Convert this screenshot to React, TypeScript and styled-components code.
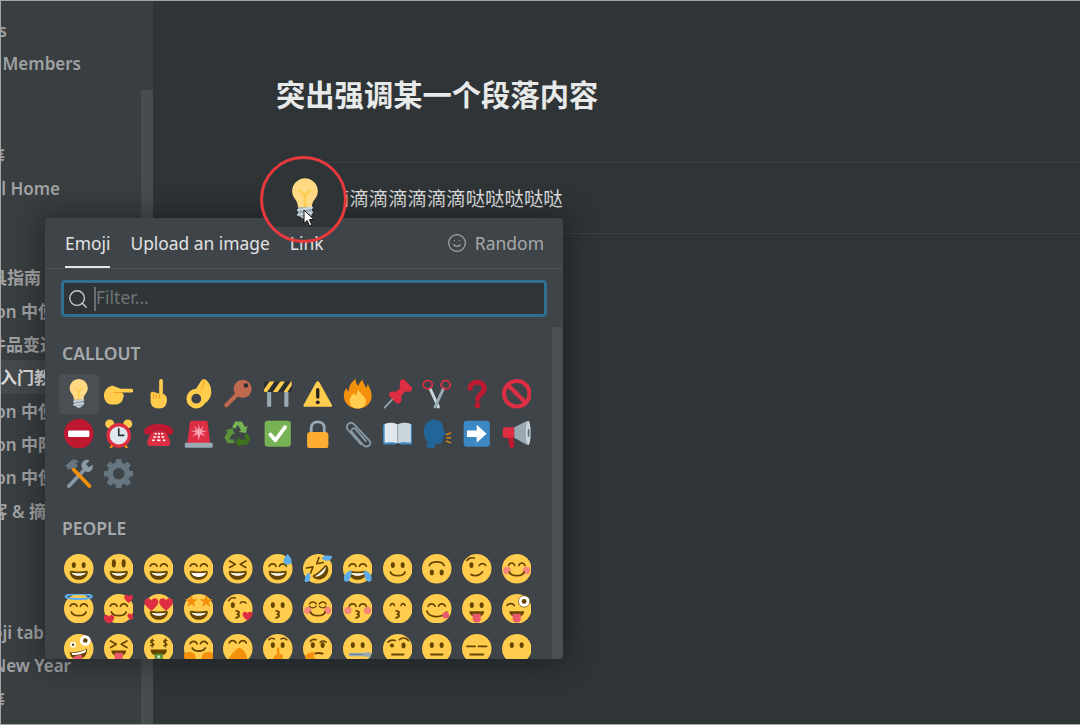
import type { ReactNode } from "react";
import { Search, Smile } from "lucide-react";
import styled, { createGlobalStyle } from "styled-components";

const Y = "#FFCC4D";
const D = "#664500";
const BLUE = "#5DADEC";
const TONGUE = "#E8596E";
const PINK = "#F4708A";
const RED = "#DD2E44";
const HAND = "#F4900C";

const Line = ({ d, w = 2, c = D }: { d: string; w?: number; c?: string }) => (
	<path d={d} fill="none" stroke={c} strokeWidth={w} strokeLinecap="round" strokeLinejoin="round" />
);
const Face = ({ children }: { children?: ReactNode }) => (
	<>
		<circle cx="18" cy="18" r="18" fill={Y} />
		{children}
	</>
);
const Eyes = () => (
	<g fill={D}>
		<ellipse cx="12" cy="13.5" rx="2.5" ry="3.5" />
		<ellipse cx="24" cy="13.5" rx="2.5" ry="3.5" />
	</g>
);
const TallEyes = () => (
	<g fill={D}>
		<ellipse cx="12" cy="11.5" rx="2.5" ry="5" />
		<ellipse cx="24" cy="11.5" rx="2.5" ry="5" />
	</g>
);
const Happy = () => (
	<>
		<Line d="M7.5 15c1.5-4 7-4 8.5 0" />
		<Line d="M20 15c1.5-4 7-4 8.5 0" />
	</>
);
const Squint = () => (
	<>
		<Line d="M8 8.5l7 4-7 4" />
		<Line d="M28 8.5l-7 4 7 4" />
	</>
);
const Grin = () => (
	<>
		<path fill={D} d="M18 21.5c-3.6 0-6-.4-9-1-.7-.1-2 0-2 2 0 4 4.6 9 11 9s11-5 11-9c0-2-1.3-2.1-2-2-3 .6-5.4 1-9 1z" />
		<path fill="#fff" d="M9 22.5s3 1 9 1 9-1 9-1-2 4-9 4-9-4-9-4z" />
	</>
);
const Smiling = () => <Line d="M9 22c2 6 16 6 18 0" w={2.2} />;
const Kiss = () => <Line d="M16 20.5c4 0 5 2.5 1.5 4 3.5 1.5 2.5 4-1.5 4.5" w={2.2} />;
const Blush = () => (
	<g fill={PINK} opacity=".75">
		<circle cx="6" cy="20" r="4.5" />
		<circle cx="30" cy="20" r="4.5" />
	</g>
);
const Wink = () => (
	<>
		<Line d="M6 8c2-3 6-4 9-3" />
		<ellipse cx="11.5" cy="13.5" rx="2.5" ry="3.5" fill={D} />
		<Line d="M21 14c2-3 6-3 8 0" />
	</>
);
const Tongue = ({ x = 18, y = 25 }: { x?: number; y?: number }) => (
	<>
		<path fill={D} d={`M${x - 9} ${y - 4}h18c0 4-3 7-9 7s-9-3-9-7z`} />
		<path fill={TONGUE} d={`M${x - 5} ${y - 1}h10v6c0 3-2 5-5 5s-5-2-5-5z`} />
	</>
);
const Heart = ({ x, y, s = 1 }: { x: number; y: number; s?: number }) => (
	<path
		transform={`translate(${x} ${y}) scale(${s})`}
		fill={RED}
		d="M0-1.5C-.9-3.4-3.6-3.2-4-1-4.3 1-2 2.8 0 4.5 2 2.8 4.3 1 4-1 3.6-3.2.9-3.4 0-1.5z"
	/>
);
const Star = ({ x, y }: { x: number; y: number }) => (
	<polygon
		transform={`translate(${x} ${y})`}
		fill="#F4900C"
		points="0,-8 2,-2.6 8,-2.6 3.2,1 5,7 0,3.4 -5,7 -3.2,1 -8,-2.6 -2,-2.6"
	/>
);
const Flat = () => <Line d="M11 25h14" w={2.2} />;

const FACES: ReactNode[] = [
	<Face><Eyes /><Grin /></Face>,
	<Face><TallEyes /><Grin /></Face>,
	<Face><Happy /><Grin /></Face>,
	<Face><Happy /><Grin /><path fill="#fff" d="M9 22.5s3 1 9 1 9-1 9-1-1 5.500-9 5.500-9-5.500-9-5.500z" /></Face>,
	<Face><Squint /><Grin /></Face>,
	<Face>
		<Happy /><Grin />
		<path fill={BLUE} d="M30 13c-3 0-5-2-5-4.500C25 5.500 28 2.500 30 0c2 2.500 5 5.500 5 8.500 0 2.500-2 4.500-5 4.500z" />
	</Face>,
	<>
		<g transform="rotate(-40 18 18)">
			<Face><Squint /><Grin /></Face>
		</g>
		<path fill={BLUE} d="M36 3c-1 4-5 6-9 5-2-.5-4-2-4-3s2-3 5-3c3-.5 6 0 8 1z" />
		<path fill={BLUE} d="M2 34c4 1 7-2 7-6 0-2-1-5-2-5s-3 2-4 5c-1 2-1 4-1 6z" />
	</>,
	<>
		<Face><Happy /><Grin /></Face>
		<path fill={BLUE} d="M1 29c0-3 3-8 9-9 1 0 0 6-1 9-1 3-3 5-5 5s-3-2-3-5z" />
		<path fill={BLUE} d="M35 29c0-3-3-8-9-9-1 0 0 6 1 9 1 3 3 5 5 5s3-2 3-5z" />
	</>,
	<Face><Eyes /><Smiling /></Face>,
	<g transform="rotate(180 18 18)">
		<Face><Eyes /><Smiling /></Face>
	</g>,
	<Face><Wink /><Line d="M11 25c5 3 11 1 14-3" w={2.2} /></Face>,
	<Face><Blush /><Line d="M8 14c1.500-4 6-4 7.500 0" /><Line d="M20.500 14c1.500-4 6-4 7.500 0" /><Smiling /></Face>,

	<>
		<Face><Happy /><Smiling /></Face>
		<ellipse cx="18" cy="3" rx="16" ry="3" fill="none" stroke={BLUE} strokeWidth="2.500" />
	</>,
	<Face>
		<Happy /><Smiling />
		<Heart x={30} y={5} s={1.300} /><Heart x={6} y={30} s={1.600} /><Heart x={33} y={27} s={1.100} />
	</Face>,
	<Face><Grin /><Heart x={9} y={11} s={2.100} /><Heart x={27} y={11} s={2.100} /></Face>,
	<Face><Grin /><Star x={9} y={9} /><Star x={27} y={9} /></Face>,
	<Face>
		<Line d="M7 8c2-3 5-4 8-3" />
		<ellipse cx="12" cy="13.500" rx="2.500" ry="3.500" fill={D} />
		<Line d="M21 11c2-2 5-2 7 0" />
		<Kiss />
		<Heart x={30} y={26} s={1.500} />
	</Face>,
	<Face><Eyes /><Kiss /></Face>,
	<Face><Blush /><Line d="M8 12c2-3 6-3 8 0" /><Line d="M20 12c2-3 6-3 8 0" /><Line d="M8 15c2 2.500 6 2.500 8 0" w={1.600} /><Line d="M20 15c2 2.500 6 2.500 8 0" w={1.600} /><Smiling /></Face>,
	<Face><Blush /><Happy /><Kiss /></Face>,
	<Face><Line d="M9 14c1-3 4-3 5 0" /><Line d="M22 14c1-3 4-3 5 0" /><Kiss /></Face>,
	<Face><Happy /><Line d="M6 21c3 8 18 9 24 1" w={2.200} /><circle cx="29" cy="26" r="4" fill={TONGUE} /></Face>,
	<Face><Eyes /><Tongue /></Face>,
	<Face>
		<Line d="M6 14c2-3 7-3 9 0" />
		<circle cx="27" cy="9" r="7" fill="#fff" stroke={D} strokeWidth=".8" />
		<circle cx="27" cy="9" r="3" fill={D} />
		<Tongue />
	</Face>,

	<Face>
		<circle cx="11" cy="13" r="3.500" fill="#fff" /><circle cx="11" cy="13" r="1.500" fill={D} />
		<circle cx="26" cy="8" r="6.500" fill="#fff" /><circle cx="26" cy="8" r="2.800" fill={D} />
		<path fill={D} d="M7 22c6 1 14-1 21-4 1 6-3 12-10 13s-11-4-11-9z" />
		<path fill="#fff" d="M9 23c6 .5 12-1 18-4l-.5 3c-5 2.500-11 4-16 3.500z" />
		<path fill={TONGUE} d="M11 29c1-2 9-4 11-3 1 3-.5 8-5 9s-7-3-6-6z" />
	</Face>,
	<Face><Squint /><Tongue y={24} /></Face>,
	<Face>
		<Line d="M12 8c-2-1-4 0-4 1.500s4 1.500 4 3-2 2.500-4 1.500M10 6v10" w={1.600} />
		<Line d="M28 8c-2-1-4 0-4 1.500s4 1.500 4 3-2 2.500-4 1.500M26 6v10" w={1.600} />
		<path fill={D} d="M8 19h20c0 5-4 8-10 8s-10-3-10-8z" />
		<rect x="13" y="24" width="10" height="8" fill="#5C913B" />
		<circle cx="18" cy="28" r="2" fill="#C6E5B3" />
	</Face>,
	<Face>
		<Line d="M7.500 12c1.500-4 7-4 8.500 0" />
		<Line d="M20 12c1.500-4 7-4 8.500 0" />
		<Line d="M10 17c3 5 13 5 16 0" w={2.200} />
		<g fill={HAND}>
			<path d="M0 24c2-2 8-3 11-1 3 2 4 6 3 13H5c-3-2-6-8-5-12z" />
			<path d="M36 24c-2-2-8-3-11-1-3 2-4 6-3 13h9c3-2 6-8 5-12z" />
		</g>
	</Face>,
	<Face>
		<Line d="M7.500 11c1.500-4 7-4 8.500 0" />
		<Line d="M20 11c1.500-4 7-4 8.500 0" />
		<path fill={HAND} d="M7 30c3-5 10-14 14-13 3 1 7 6 8 10 1 5-2 9-7 9h-8c-3 0-6-2-7-6z" />
	</Face>,
	<Face>
		<Line d="M7 7c2-2 5-2 7-1" /><Line d="M22 6c2-1 5-1 7 1" />
		<Eyes />
		<path fill={HAND} d="M17 17c1-1 3-1 3 1v6c3 0 5 2 4 6s-4 6-7 6-5-3-4-7c.5-2 2-4 4-4z" />
	</Face>,
	<Face>
		<Line d="M9 9c1-2 4-3 7-2" />
		<Line d="M21 10c2-2 5-2 7 0" />
		<Eyes />
		<Line d="M14 24c3-1 7-1 10 0" w={2.200} />
		<path fill={HAND} d="M3 26c3-2 6-4 9-4 2 0 3 1 3 2s-2 2-3 3c3 1 4 3 3 5s-3 4-7 3-6-6-5-9z" />
	</Face>,
	<Face>
		<Eyes />
		<rect x="7" y="23" width="24" height="4" rx="1" fill="#99AAB5" />
		<Line d="M9 25h16" w={1} c="#66757F" />
		<path fill="#99AAB5" d="M28 22l7 1-2 6-6-2z" />
	</Face>,
	<Face>
		<Line d="M6 10c2-2 6-3 9-2" />
		<Line d="M20 7c3-3 8-3 11 1" />
		<ellipse cx="11" cy="14" rx="2.500" ry="2.500" fill={D} />
		<ellipse cx="25" cy="14" rx="2.500" ry="3.500" fill={D} />
		<Flat />
	</Face>,
	<Face><Eyes /><Flat /></Face>,
	<Face>
		<Line d="M6 15h10" w={2.200} /><Line d="M20 15h10" w={2.200} /><Line d="M10 25h16" w={2.200} />
	</Face>,
	<Face><Eyes /></Face>,
];

const Bulb = () => (
	<>
		<path fill="#FFD983" d="M29 11.060c0 6.439-5 7.439-5 13.440 0 3.098-3.123 3.359-5.500 3.359-2.053 0-6.586-.779-6.586-3.361C11.914 18.500 7 17.500 7 11.060 7 5.029 12.285.140 18.083.140 23.883.140 29 5.029 29 11.060z" />
		<path fill="#CCD6DD" d="M22.167 32.500c0 .828-2.234 2.500-4.167 2.500-1.933 0-4.167-1.672-4.167-2.500 0-.828 2.233-.500 4.167-.500 1.933 0 4.167-.328 4.167.500z" />
		<path fill="#FFCC4D" d="M22.707 10.293c-.391-.391-1.023-.391-1.414 0L18 13.586l-3.293-3.293c-.391-.391-1.023-.391-1.414 0s-.391 1.023 0 1.414L17 15.414V26c0 .553.448 1 1 1s1-.447 1-1V15.414l3.707-3.707c.391-.391.391-1.023 0-1.414z" />
		<path fill="#99AAB5" d="M24 31c0 1.104-.896 2-2 2h-8c-1.104 0-2-.896-2-2v-6h12v6z" />
		<Line d="M12 31.500l12-2M12 27.500l12-2" w={1.800} c="#CCD6DD" />
	</>
);

const Recycle = () => {
	const arrow = "M18 3l5 0 4 7 3-2-2 9-9-1 3-2-4-7-3 5-4-2 4-7z";
	return (
		<>
			<path d={arrow} fill="#77B255" />
			<path d={arrow} fill="#3E721D" transform="rotate(120 18 19)" />
			<path d={arrow} fill="#5C913B" transform="rotate(240 18 19)" />
		</>
	);
};

const GEAR_TEETH = [0, 45, 90, 135, 180, 225, 270, 315];

const CALLOUTS: ReactNode[] = [
	<Bulb />,
	<>
		<rect x="14" y="12" width="22" height="4.500" rx="2.200" fill={Y} />
		<path fill={Y} d="M0 20c0-6 4-10 10-12l8 3c2 .5 3 3 3 5l2 2c2 1 1 4 0 6-1 5-5 7-10 7H9c-5 0-9-5-9-11z" />
		<Line d="M12 16.500c3 .5 6 .5 9 0" w={1} c="#F4900C" />
	</>,
	<>
		<rect x="18.500" y="0" width="4.500" height="22" rx="2.200" fill={Y} />
		<path fill={Y} d="M8 18c0-2 2-2.500 3-2.500l8 2.500h4c3 1 5 3 5 7 0 7-3 11-10 11-8 0-10-5-10-10z" />
		<Line d="M11.500 17v7M15 18v6M19 19v5" w={1} c="#F4900C" />
	</>,
	<>
		<circle cx="15" cy="24" r="9" fill="none" stroke={Y} strokeWidth="6" />
		<path fill={Y} d="M12 16c3-4 6-10 9-14 2-2.500 5-2 7 0 4 4 6 10 5 17-1 4-3 7-6 10l-6-5c1-4 0-8-3-9z" />
		<Line d="M24 3c0 4-1 8-3 11" w={1} c="#F4900C" />
	</>,
	<>
		<Line d="M18 18L4 32" w={5} c="#C1694F" />
		<circle cx="24" cy="12" r="11" fill="#C1694F" />
		<circle cx="28" cy="8" r="2.800" fill="#292F33" />
	</>,
	<>
		<rect x="5" y="15" width="5" height="19" rx="1" fill="#99AAB5" />
		<rect x="26" y="15" width="5" height="19" rx="1" fill="#99AAB5" />
		<rect x="1" y="3" width="34" height="13" rx="2" fill="#292F33" />
		<path fill={Y} d="M1 13l7-10h6L5 16H3c-1 0-2-1-2-2zM12 16l9-13h6l-9 13zM25 16l9-13h1v5l-5 8z" />
	</>,
	<>
		<path fill={Y} d="M2.600 34C.600 34 0 32.600 1 31L16 4c1-1.800 3-1.800 4 0l15 27c1 1.600.400 3-1.600 3z" />
		<rect x="16" y="11" width="4" height="13" rx="2" fill="#231F20" />
		<circle cx="18" cy="28.500" r="2.300" fill="#231F20" />
	</>,
	<>
		<path fill="#F4900C" d="M35 20c0 9-7 16-17 16S1 29 1 20c0-5 3-9 3-9s1 3 3 4c0-6 3-12 9-15-1 4 1 7 3 8 1-3 2-5 5-7 0 4 3 6 4 10 1-1 2-3 2-5 2 3 5 9 5 14z" />
		<path fill={Y} d="M28 27c0 5-4 9-10 9S8 32 8 27s3-7 5-10c1 2 2 3 3 3 1-3 1-5 3-7 1 3 4 5 6 8 2 2 3 4 3 6z" />
	</>,
	<>
		<Line d="M15 21L2 35" w={2} c="#99AAB5" />
		<path fill={RED} d="M22 1c1-1 3-1 4 0l9 9c1 1 1 3 0 4-2 2-5 2-8 1l-5 6c1 3 1 6-1 8s-4 1-5 0L8 21c-1-1-1-3 0-4 2-2 5-2 7-1l6-5c-1-3-1-7 1-10z" />
	</>,
	<>
		<Line d="M10 12l10 22" w={3.600} c="#CCD6DD" />
		<Line d="M26 12L16 34" w={3.600} c="#99AAB5" />
		<g fill="none" stroke={RED} strokeWidth="2.200">
			<ellipse cx="7" cy="7" rx="5.500" ry="5" />
			<ellipse cx="29" cy="7" rx="5.500" ry="5" />
		</g>
	</>,
	<>
		<Line d="M10 11.500c0-10 17-10 17 0 0 7-8 7-8 13.500" w={6} c="#BE1931" />
		<circle cx="19" cy="32" r="3.500" fill="#BE1931" />
	</>,
	<>
		<circle cx="18" cy="18" r="15.500" fill="none" stroke={RED} strokeWidth="5" />
		<path d="M7 7l22 22" stroke={RED} strokeWidth="5" />
	</>,

	<>
		<circle cx="18" cy="18" r="18" fill="#BE1931" />
		<rect x="5" y="14" width="26" height="8" rx="1.500" fill="#fff" />
	</>,
	<>
		<circle cx="7" cy="6" r="5.500" fill={Y} />
		<circle cx="29" cy="6" r="5.500" fill={Y} />
		<rect x="8" y="30" width="3" height="6" rx="1" fill="#F4900C" transform="rotate(30 9 33)" />
		<rect x="25" y="30" width="3" height="6" rx="1" fill="#F4900C" transform="rotate(-30 27 33)" />
		<circle cx="18" cy="20" r="15" fill={RED} />
		<circle cx="18" cy="20" r="11" fill="#E1E8ED" />
		<Line d="M18 12v8h6" w={2} c="#292F33" />
	</>,
	<>
		<path fill="#BE1931" d="M0 16c0-6 8-10 18-10s18 4 18 10c0 2-1 3-3 3h-5c-2 0-2-2-2-4H10c0 2 0 4-2 4H3c-2 0-3-1-3-3z" />
		<path fill={RED} d="M4 30c0-6 5-15 9-15h10c4 0 9 9 9 15 0 2-1 3-3 3H7c-2 0-3-1-3-3z" />
		<g fill="#fff">
			<rect x="13" y="17" width="2.500" height="2" /><rect x="17" y="17" width="2.500" height="2" /><rect x="21" y="17" width="2.500" height="2" />
			<rect x="11.500" y="21" width="3" height="2" /><rect x="16.500" y="21" width="3" height="2" /><rect x="21.500" y="21" width="3" height="2" />
			<rect x="10" y="25" width="3" height="2" /><rect x="16" y="25" width="4" height="2" /><rect x="23" y="25" width="3" height="2" />
		</g>
	</>,
	<>
		<path fill={RED} d="M7 5c0-2 1-3 3-3h16c2 0 3 1 3 3l3 25H4z" />
		<path fill="#F7A3AE" d="M18 6l1.500 7 5-5-3 6 7 .500-7 2 5 5-6.500-3L18 26l-1.500-7.500-6.500 3 5-5-7-2 7-.500-3-6 5 5z" />
		<rect x="1" y="29" width="34" height="6" rx="1" fill="#99AAB5" />
	</>,
	<Recycle />,
	<>
		<rect x="2" y="2" width="32" height="32" rx="4" fill="#77B255" />
		<Line d="M9 19l6 7 12-16" w={4.500} c="#fff" />
	</>,
	<>
		<path d="M10 18V11c0-10 16-10 16 0v7" fill="none" stroke="#99AAB5" strokeWidth="3.500" />
		<rect x="5" y="16" width="26" height="20" rx="4" fill="#FFAC33" />
	</>,
	<Line d="M22 31L6 13C2 8 8 2 13 6l19 20c4 5-2 10-7 6L11 16c-2-3 2-6 4-4l13 15" w={2.200} c="#8899A6" />,
	<>
		<rect x="0" y="6" width="36" height="25" rx="2" fill="#3B88C3" />
		<path fill="#E1E8ED" d="M2 6c5-2 12-2 16 1v23c-4-2-11-2-16-1z" />
		<path fill="#CCD6DD" d="M34 6c-5-2-12-2-16 1v23c4-2 11-2 16-1z" />
		<rect x="17" y="7" width="1.500" height="23" fill="#99AAB5" />
		<rect x="16" y="30" width="4" height="1.500" fill="#292F33" />
	</>,
	<>
		<path fill="#226699" d="M2 15C2 7 8 1 15 1c7 0 11 5 11 11 0 2 4 6 3 7s-3 0-3 2 0 3-1 4 1 3-2 5c-3 1-6 0-7 1v4c-3 1-8 0-11-1 1-2 3-3 1-7-2-3-4-7-4-12z" />
		<Line d="M30 19l5-2M30 23h5M30 27l5 2" w={1.500} c="#F4900C" />
	</>,
	<>
		<rect x="2" y="2" width="32" height="32" rx="4" fill="#3B88C3" />
		<path fill="#fff" d="M6 14h12V7l12 11-12 11v-7H6z" />
	</>,
	<>
		<path fill="#BE1931" d="M7 22h7l1 11c0 3-6 3-6 0z" />
		<path fill={RED} d="M1 13c0-2 1-3 3-3h11v13H4c-2 0-3-1-3-3z" />
		<path fill="#99AAB5" d="M15 10L31 2v30L15 23z" />
		<ellipse cx="32" cy="17" rx="3" ry="15" fill="#CCD6DD" />
		<ellipse cx="32.500" cy="17" rx="1.200" ry="5" fill="#66757F" />
	</>,

	<>
		<Line d="M26 12L6 33" w={4.500} c="#8899A6" />
		<path fill="#66757F" d="M2 8l8-7c3-1 6 0 8 3l-4 1 3 3-6 7-3-3-3 1z" />
		<path fill="#8899A6" d="M35 7c1 4-1 8-5 9-2 0-4-1-5-2l-3-3c-2-3 0-9 5-10 2 0 3 0 4 1l-4 4 3 4z" />
		<Line d="M12 13l19 20" w={4.500} c="#F4900C" />
	</>,
	<>
		{GEAR_TEETH.map((angle) => (
			<rect key={angle} x="14.500" y="0" width="7" height="8" rx="1.500" fill="#66757F" transform={`rotate(${angle} 18 18)`} />
		))}
		<circle cx="18" cy="18" r="10.500" fill="none" stroke="#66757F" strokeWidth="7" />
	</>,
];

const SIDEBAR_ROWS = [
	{ text: "Templates", end: 7, top: 0 },
	{ text: "Team Members", end: 81, top: 0 },
	{ text: "工作计划等", end: 5, top: 58 },
	{ text: "Personal Home", end: 60, top: 0 },
	{ text: "工具指南", end: 41, top: 55 },
	{ text: "Notion 中使用", end: 72, top: 0 },
	{ text: "软件品变迁", end: 57, top: 0 },
	{ text: "入门教程", end: 68, top: 0, active: true },
	{ text: "Notion 中使用", end: 72, top: 0 },
	{ text: "Notion 中阶技巧", end: 89, top: 0 },
	{ text: "Notion 中使用", end: 72, top: 0 },
	{ text: "博客 & 摘录", end: 63, top: 0 },
	{ text: "Emoji tab", end: 44, top: 89 },
	{ text: "New Year", end: 71, top: 0 },
	{ text: "工作计划等", end: 5, top: 0 },
];

const TEXT_STACK = `"Noto Sans", "Noto Sans CJK SC", sans-serif`;

const GlobalStyle = createGlobalStyle`
	html, body {
		margin: 0;
		padding: 0;
		background: #2f3437;
	}
`;

const Frame = styled.div`
	box-sizing: border-box;
	position: relative;
	display: flex;
	width: 1080px;
	height: 725px;
	overflow: hidden;
	border: 1px solid #a3a5a6;
	border-right: none;
	font-family: ${TEXT_STACK};
	background: #2f3437;
`;

const Sidebar = styled.aside`
	position: relative;
	flex: 0 0 152px;
	box-sizing: border-box;
	padding-top: 13px;
	overflow: hidden;
	background: #393e41;
`;

const SideScroll = styled.div`
	position: absolute;
	top: 89px;
	bottom: 0;
	right: 0;
	width: 12px;
	background: #474c4f;
`;

const SideRow = styled.div<{ $end: number; $top: number; $active?: boolean }>`
	display: flex;
	justify-content: flex-end;
	align-items: center;
	width: ${(p) => p.$end - 1}px;
	height: 33.330px;
	margin-top: ${(p) => p.$top}px;
	white-space: nowrap;
	font-size: 17px;
	font-weight: 600;
	color: ${(p) => (p.$active ? "#d9dadb" : "#a0a2a4")};
`;

const ActiveBand = styled.div`
	display: flex;
	background: #45494c;
`;

const Main = styled.main`
	flex: 1;
	min-width: 0;
	padding: 73px 0 0 123px;
`;

const Title = styled.h1`
	margin: 0 0 46px;
	font-size: 29.300px;
	line-height: 42px;
	font-weight: 700;
	color: #e8e9e9;
	white-space: nowrap;
`;

const CalloutRow = styled.div`
	display: flex;
	align-items: center;
	box-sizing: content-box;
	height: 68px;
	padding: 0 0 2px 54px;
	border-top: 1px solid #3a3f42;
	border-bottom: 1px solid #3a3f42;
	font-size: 19.400px;
	color: #dedfdf;
	white-space: nowrap;
`;

const Ring = styled.div`
	position: absolute;
	z-index: 3;
	left: 259px;
	top: 155px;
	box-sizing: border-box;
	display: flex;
	justify-content: center;
	width: 87px;
	height: 87px;
	padding: 19px 0 0 2px;
	border: 3px solid #e8393c;
	border-radius: 50%;
	background: linear-gradient(#2f3437 0 68px, transparent 68px);
`;

const BulbIcon = styled.svg`
	width: 42px;
	height: 42px;
`;

const Pointer = styled.svg`
	position: absolute;
	left: 40px;
	top: 50px;
	width: 13px;
	height: 18px;
`;

const Popover = styled.section`
	position: absolute;
	z-index: 2;
	left: 44px;
	top: 217px;
	display: flex;
	flex-direction: column;
	width: 518px;
	height: 441px;
	overflow: hidden;
	border-radius: 4px;
	background: #3f4448;
	box-shadow: 0 0 30px 6px rgba(0, 0, 0, 0.32);
`;

const Tabs = styled.nav`
	display: flex;
	gap: 20px;
	flex: 0 0 50px;
	box-sizing: border-box;
	padding: 0 19px 0 20px;
	border-bottom: 1px solid #4b5054;
`;

const Tab = styled.div<{ $active?: boolean }>`
	display: flex;
	align-items: center;
	height: 50px;
	box-sizing: border-box;
	padding-top: 1px;
	border-bottom: 2px solid ${(p) => (p.$active ? "#e4e5e5" : "transparent")};
	font-size: 17.400px;
	color: #e2e3e4;
	white-space: nowrap;
`;

const RandomButton = styled.div`
	display: flex;
	align-items: center;
	gap: 8px;
	margin-left: auto;
	padding-top: 1px;
	height: 48px;
	font-size: 17.500px;
	color: #a6a9ab;
`;

const SearchBox = styled.div`
	box-sizing: border-box;
	display: flex;
	align-items: center;
	flex: 0 0 37px;
	margin: 11px 16px 0;
	padding: 0 0 0 3px;
	border: 3px solid #2f6f8f;
	border-radius: 4px;
	background: #2f3437;
	color: #c9cbcc;
`;

const Caret = styled.span`
	flex: 0 0 2px;
	height: 24px;
	margin-left: 5px;
	background: #6a6e70;
`;

const SearchInput = styled.input`
	flex: 1;
	min-width: 0;
	border: none;
	outline: none;
	padding: 0 0 3px;
	background: transparent;
	font-family: ${TEXT_STACK};
	font-size: 17.500px;
	color: #e2e3e4;

	&::placeholder {
		color: #707476;
		opacity: 1;
	}
`;

const ScrollArea = styled.div`
	flex: 1;
	min-height: 0;
	overflow: hidden;
	padding: 24px 0 0 14px;
`;

const SectionLabel = styled.h2<{ $top?: number }>`
	margin: ${(p) => p.$top ?? 0}px 0 9px;
	padding-left: 3px;
	font-size: 17.500px;
	line-height: 24px;
	font-weight: 600;
	color: #a6a9ab;
`;

const EmojiGrid = styled.div`
	display: grid;
	grid-template-columns: repeat(12, 39.800px);
	grid-auto-rows: 39.800px;
`;

const EmojiCell = styled.div<{ $active?: boolean }>`
	display: flex;
	align-items: center;
	justify-content: center;
	border-radius: 4px;
	background: ${(p) => (p.$active ? "#4a4f53" : "transparent")};
`;

const EmojiIcon = styled.svg`
	width: 29.500px;
	height: 29.500px;
`;

const PopoverScroll = styled.div`
	position: absolute;
	right: 0;
	top: 109px;
	bottom: 0;
	width: 11px;
	background: #4a4f52;
`;

function Emoji({ children, active }: { children: ReactNode; active?: boolean }) {
	return (
		<EmojiCell $active={active}>
			<EmojiIcon viewBox="0 0 36 36">{children}</EmojiIcon>
		</EmojiCell>
	);
}

export default function App() {
	return (
		<>
			<GlobalStyle />
			<Frame>
				<Sidebar>
					{SIDEBAR_ROWS.map((row, i) =>
						row.active ? (
							<ActiveBand key={i}>
								<SideRow $end={row.end} $top={row.top} $active>
									{row.text}
								</SideRow>
							</ActiveBand>
						) : (
							<SideRow key={i} $end={row.end} $top={row.top}>
								{row.text}
							</SideRow>
						),
					)}
					<SideScroll />
				</Sidebar>
				<Main>
					<Title>突出强调某一个段落内容</Title>
					<CalloutRow>滴滴滴滴滴滴滴哒哒哒哒哒</CalloutRow>
				</Main>
				<Popover>
					<Tabs>
						<Tab $active>Emoji</Tab>
						<Tab>Upload an image</Tab>
						<Tab>Link</Tab>
						<RandomButton>
							<Smile size={20} strokeWidth={1.4} />
							Random
						</RandomButton>
					</Tabs>
					<SearchBox>
						<Search size={22} strokeWidth={1.5} />
						<Caret />
						<SearchInput placeholder="Filter..." readOnly />
					</SearchBox>
					<ScrollArea>
						<SectionLabel>CALLOUT</SectionLabel>
						<EmojiGrid>
							{CALLOUTS.map((glyph, i) => (
								<Emoji key={i} active={i === 0}>
									{glyph}
								</Emoji>
							))}
						</EmojiGrid>
						<SectionLabel $top={22.5}>PEOPLE</SectionLabel>
						<EmojiGrid>
							{FACES.map((glyph, i) => (
								<Emoji key={i}>{glyph}</Emoji>
							))}
						</EmojiGrid>
					</ScrollArea>
					<PopoverScroll />
				</Popover>
				<Ring>
					<BulbIcon viewBox="0 0 36 36">
						<Bulb />
					</BulbIcon>
					<Pointer viewBox="0 0 13 18">
						<path d="M1 1v13.500l3.200-3 2.300 5.300 2.300-1-2.300-5.200h4.500z" fill="#fff" stroke="#111" strokeWidth="1" />
					</Pointer>
				</Ring>
			</Frame>
		</>
	);
}
